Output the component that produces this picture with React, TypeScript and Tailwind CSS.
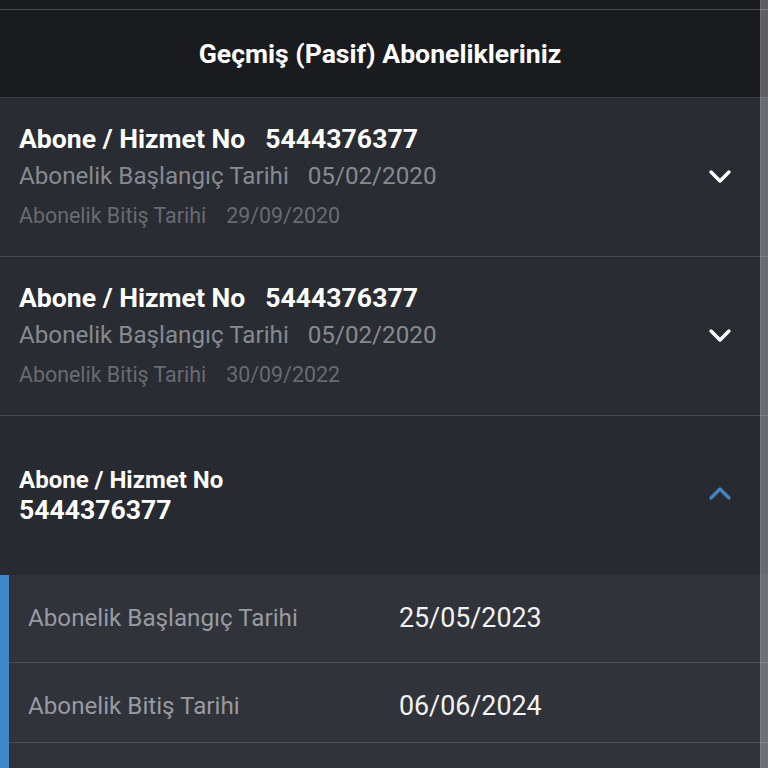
import React from "react";

const font = { fontFamily: "Roboto, 'Noto Sans', sans-serif" };

function Chevron({ up, color }: { up?: boolean; color: string }) {
  return (
    <svg width="24" height="16" viewBox="0 0 24 16" className="shrink-0">
      <polyline
        points={up ? "3,13 12,4 21,13" : "3,3 12,12 21,3"}
        fill="none"
        stroke={color}
        strokeWidth="3.4"
        strokeLinecap="round"
        strokeLinejoin="round"
      />
    </svg>
  );
}

function CollapsedItem({ start, end }: { start: string; end: string }) {
  return (
    <div className="flex h-[159px] items-center border-b border-[#44474c] bg-[#292c32] pl-[19px] pr-[36px]">
      <div className="flex flex-1 flex-col pt-[1px]">
        <div className="flex h-[40px] items-center text-[26.6px] font-bold text-white">
          <span>Abone / Hizmet No</span>
          <span className="ml-[20px]">5444376377</span>
        </div>
        <div className="flex h-[38px] items-center pb-[2px] text-[24.2px] text-[#878a90]">
          <span>Abonelik Başlangıç Tarihi</span>
          <span className="ml-[19px]">{start}</span>
        </div>
        <div className="flex h-[40px] items-center text-[21.4px] text-[#686b71]">
          <span>Abonelik Bitiş Tarihi</span>
          <span className="ml-[20px]">{end}</span>
        </div>
      </div>
      <Chevron color="#ffffff" />
    </div>
  );
}

function DetailRow({ label, value, h }: { label: string; value: string; h: string }) {
  return (
    <div className={`flex items-start border-b border-[#4a4d53] pl-[19px] pt-[27px] ${h}`}>
      <span className="w-[371px] shrink-0 text-[24.2px] leading-[32px] text-[#989ba1]">{label}</span>
      <span className="text-[26.8px] leading-[32px] text-[#f2f2f2]">{value}</span>
    </div>
  );
}

export default function App() {
  return (
    <div className="relative h-[768px] w-[768px] overflow-hidden bg-[#1a1b1f]" style={font}>
      <div className="h-[10px] border-b border-[#46484c] bg-[#1a1b1f]" />
      <div className="flex h-[88px] items-center justify-center border-b border-[#3a3c41] bg-[#1a1b1f] pr-[8px]">
        <h1 className="text-[26.6px] font-bold text-white">Geçmiş (Pasif) Abonelikleriniz</h1>
      </div>
      <CollapsedItem start="05/02/2020" end="29/09/2020" />
      <CollapsedItem start="05/02/2020" end="30/09/2022" />
      <div className="flex h-[159px] items-center bg-[#272a30] pl-[19px] pr-[36px]">
        <div className="flex flex-1 flex-col pb-[2px]">
          <span className="text-[24px] font-bold leading-[30px] text-white">Abone / Hizmet No</span>
          <span className="text-[26.6px] font-bold leading-[30px] text-white">5444376377</span>
        </div>
        <div className="pb-[6px]">
          <Chevron up color="#4483c2" />
        </div>
      </div>
      <div className="flex bg-[#30333a]">
        <div className="w-[9px] shrink-0 bg-[#3f87c8]" />
        <div className="flex flex-1 flex-col">
          <DetailRow label="Abonelik Başlangıç Tarihi" value="25/05/2023" h="h-[88px]" />
          <DetailRow label="Abonelik Bitiş Tarihi" value="06/06/2024" h="h-[80px]" />
          <div className="h-[87px]" />
        </div>
      </div>
      <div className="absolute right-0 top-0 h-full w-[8px] border-l border-white/10 bg-white/30" />
    </div>
  );
}
